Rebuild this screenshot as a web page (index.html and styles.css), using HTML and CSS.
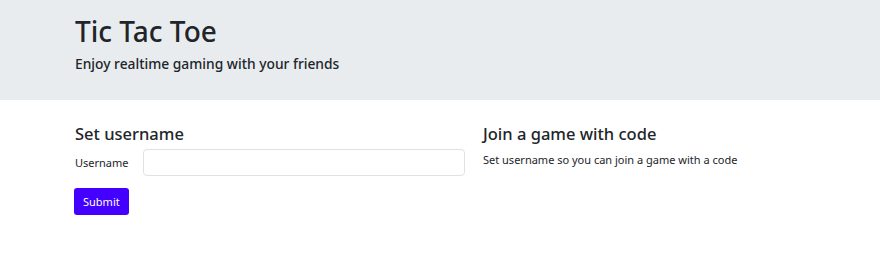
FILE: index.html
```html
<!DOCTYPE html>
<html lang="en">
<head>
<meta charset="utf-8">
<title>Tic Tac Toe</title>
<link rel="stylesheet" href="styles.css">
</head>
<body>
<header class="hero">
  <div class="container">
    <h1 class="title">Tic Tac Toe</h1>
    <p class="lead">Enjoy realtime gaming with your friends</p>
  </div>
</header>
<main class="container columns">
  <section class="col">
    <h2 class="heading">Set username</h2>
    <form class="form">
      <div class="field">
        <label class="label" for="username">Username</label>
        <input class="input" id="username" type="text">
      </div>
      <button class="btn" type="button">Submit</button>
    </form>
  </section>
  <section class="col">
    <h2 class="heading">Join a game with code</h2>
    <p class="text">Set username so you can join a game with a code</p>
  </section>
</main>
</body>
</html>
```
FILE: styles.css
```css
* { box-sizing: border-box; }
body {
  margin: 0;
  font-family: "Noto Sans", "Open Sans", sans-serif;
  color: #212529;
  background: #fff;
}
.container {
  padding: 0 75px;
}
.hero {
  background: #e9ecef;
  height: 100px;
  padding-top: 13px;
}
.title {
  margin: 0;
  font-size: 28px;
  font-weight: 500;
  line-height: 36px;
}
.lead {
  margin: 5px 0 0;
  font-size: 13.8px;
  font-weight: 500;
  line-height: 20px;
}
.columns {
  display: grid;
  grid-template-columns: 390px 1fr;
  column-gap: 18px;
  padding-top: 22px;
}
.heading {
  margin: 0;
  font-size: 16.5px;
  font-weight: 500;
  line-height: 24px;
}
.field {
  display: flex;
  align-items: center;
  margin-top: 3px;
}
.label {
  width: 68px;
  font-size: 11px;
}
.input {
  flex: 1;
  height: 27px;
  border: 1px solid #dee2e6;
  border-radius: 4px;
  font: inherit;
}
.btn {
  margin-top: 12px;
  height: 27px;
  padding: 0 9px;
  margin-left: -1px;
  background: #4400ff;
  color: #fff;
  border: none;
  border-radius: 3px;
  font-family: inherit;
  font-size: 11px;
}
.text {
  margin: 5px 0 0;
  font-size: 11px;
  line-height: 18px;
}
```
